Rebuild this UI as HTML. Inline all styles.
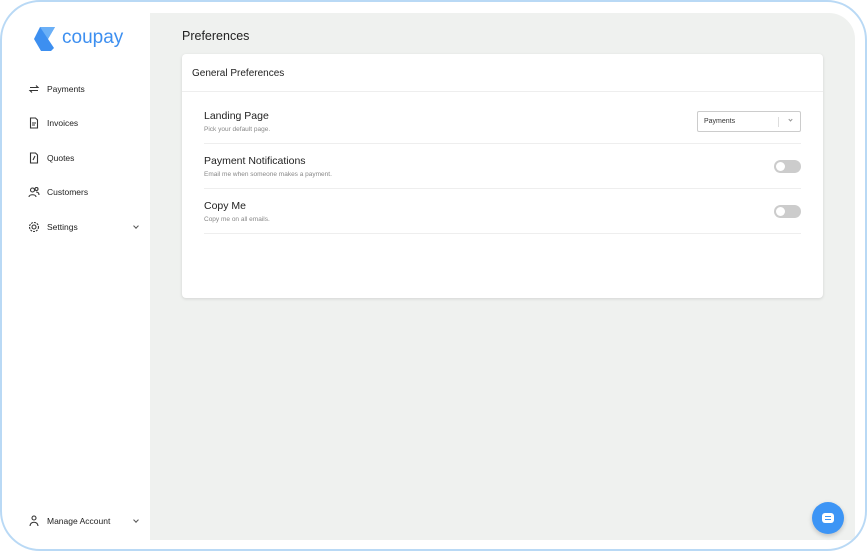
<!DOCTYPE html>
<html><head><style>
*{margin:0;padding:0;box-sizing:border-box}
body{width:867px;height:551px;background:#fff;font-family:"Liberation Sans",sans-serif;position:relative;overflow:hidden}
.frame{position:absolute;left:0;top:0;width:867px;height:551px;border-radius:40px;background:#fff;overflow:hidden}
.bord{position:absolute;left:0;top:0;width:867px;height:551px;border:2px solid #b9d9f5;border-radius:40px}
.main{position:absolute;left:150px;top:13px;width:705px;height:527px;background:#eff1ef;border-radius:0 26px 0 0}
.nav{position:absolute;left:28px;font-size:8.5px;color:#222;display:flex;align-items:center}
.nav svg{width:12px;height:12px;margin-right:7px}
.card{position:absolute;left:182px;top:54px;width:641px;height:244px;background:#fff;border-radius:4px;box-shadow:0 1px 3px rgba(0,0,0,.12)}
.hd{height:38px;border-bottom:1px solid #eee;padding:13px 10px;font-size:10px;color:#222}
.row{position:absolute;left:22px;width:597px;height:45px;border-bottom:1px solid #eee}
.t{position:absolute;left:0;font-size:10.5px;color:#222}
.s{position:absolute;left:0;font-size:6.5px;color:#888}
.tog{position:absolute;right:0;width:27px;height:13px;border-radius:7px;background:#ccc}
.tog::after{content:"";position:absolute;left:2px;top:2px;width:9px;height:9px;border-radius:50%;background:#fff}
.chev{position:absolute;width:4px;height:4px;border-right:1px solid #555;border-bottom:1px solid #555;transform:rotate(45deg)}
</style></head><body>
<div class="frame">
<svg style="position:absolute;left:33px;top:26px" width="24" height="26" viewBox="0 0 24 26"><path d="M7 1h15l-7 12 6 9-3 3H8L1 13z" fill="#3d8ff0"/><path d="M7 1h15l-7 12z" fill="#6bb0f7"/></svg>
<div style="position:absolute;left:62px;top:27px;font-size:19px;color:#3d8ff0">coupay</div>
<div class="nav" style="top:83px"><svg viewBox="0 0 12 12" fill="none" stroke="#333" stroke-width="1.1"><path d="M2 4.5h8L8 2.5M10 7.5H2l2 2"/></svg>Payments</div>
<div class="nav" style="top:117px"><svg viewBox="0 0 12 12" fill="none" stroke="#333" stroke-width="1.1"><path d="M2.5 1h5l2 2v8h-7zM4 6h4M4 8h3"/></svg>Invoices</div>
<div class="nav" style="top:152px"><svg viewBox="0 0 12 12" fill="none" stroke="#333" stroke-width="1.1"><path d="M2.5 1h5l2 2v8h-7zM5 8l2-4"/></svg>Quotes</div>
<div class="nav" style="top:186px"><svg viewBox="0 0 12 12" fill="none" stroke="#333" stroke-width="1.1"><circle cx="4.5" cy="4" r="2"/><circle cx="8.5" cy="3" r="1.5"/><path d="M1 11c0-3 7-3 7 0M8 6c2 0 3 1 3 3"/></svg>Customers</div>
<div class="nav" style="top:221px"><svg viewBox="0 0 12 12" fill="none" stroke="#333" stroke-width="1.1"><circle cx="6" cy="6" r="2"/><circle cx="6" cy="6" r="4.5" stroke-dasharray="2 1"/></svg>Settings</div>
<div class="chev" style="left:134px;top:224px"></div>
<div class="nav" style="top:515px"><svg viewBox="0 0 12 12" fill="none" stroke="#333" stroke-width="1.1"><circle cx="6" cy="3" r="2"/><path d="M2 11c0-5 8-5 8 0"/></svg>Manage Account</div>
<div class="chev" style="left:134px;top:518px"></div>
<div class="main"></div>
<div style="position:absolute;left:182px;top:29px;font-size:12.5px;color:#222">Preferences</div>
<div class="card">
<div class="hd" style="padding-top:14px">General Preferences</div>
<div class="row" style="top:45px"><div class="t" style="top:11px">Landing Page</div><div class="s" style="top:27px">Pick your default page.</div>
<div style="position:absolute;right:0;top:12px;width:104px;height:21px;border:1px solid #ccc;border-radius:2px;font-size:7px;color:#333;padding:6px 6px"><span>Payments</span><span style="position:absolute;right:21px;top:5px;width:1px;height:10px;background:#ddd"></span><span class="chev" style="right:8px;top:6px;border-color:#999;width:3px;height:3px"></span></div></div>
<div class="row" style="top:90px"><div class="t" style="top:11px">Payment Notifications</div><div class="s" style="top:27px">Email me when someone makes a payment.</div><div class="tog" style="top:16px"></div></div>
<div class="row" style="top:135px"><div class="t" style="top:11px">Copy Me</div><div class="s" style="top:27px">Copy me on all emails.</div><div class="tog" style="top:16px"></div></div>
</div>
<div style="position:absolute;left:812px;top:502px;width:32px;height:32px;border-radius:16px;background:#3d95f5;box-shadow:0 2px 5px rgba(0,0,0,.2)"><div style="position:absolute;left:10px;top:11px;width:12px;height:10px;border-radius:3px;background:#fff"></div><div style="position:absolute;left:13px;top:14px;width:6px;height:1px;background:#3d95f5"></div><div style="position:absolute;left:13px;top:17px;width:6px;height:1px;background:#3d95f5"></div></div>
</div>
<div class="bord"></div>
</body></html>
